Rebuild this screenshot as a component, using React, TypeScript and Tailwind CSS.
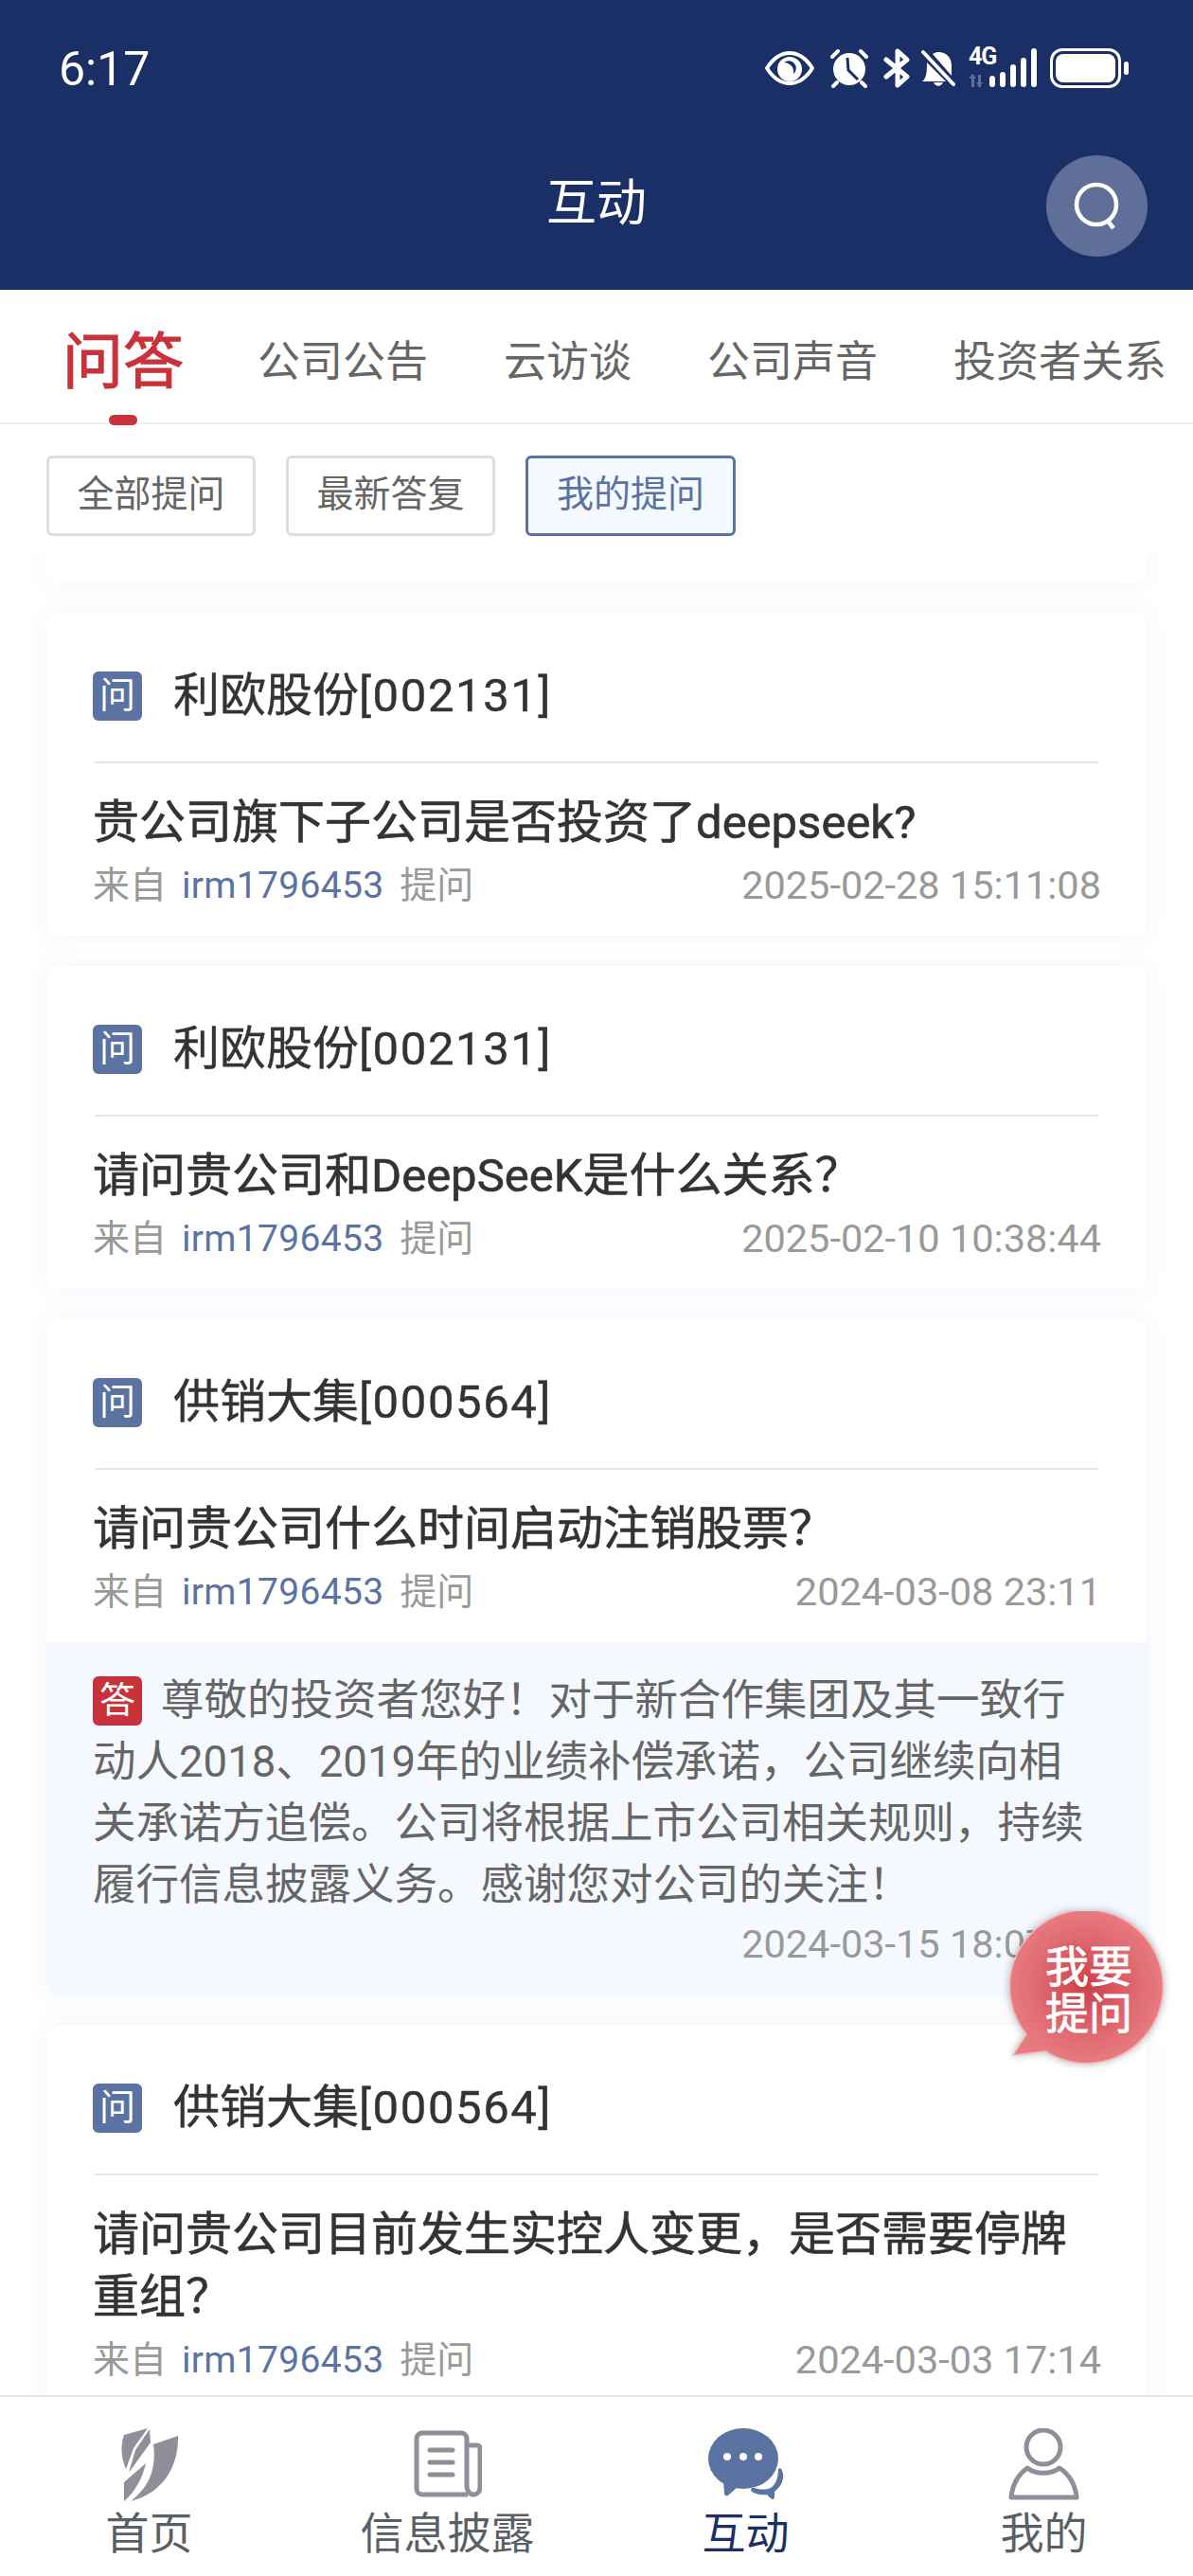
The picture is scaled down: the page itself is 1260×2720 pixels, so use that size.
import React from 'react';

const FONT = 'font-["Roboto","Noto_Sans_CJK_SC",sans-serif]';

interface Item {
  company: string;
  code: string;
  question: string;
  date: string;
  answer?: string[];
  answerDate?: string;
}

const items: Item[] = [
  { company: '利欧股份', code: '[002131]', question: '贵公司旗下子公司是否投资了deepseek?', date: '2025-02-28 15:11:08' },
  { company: '利欧股份', code: '[002131]', question: '请问贵公司和DeepSeeK是什么关系？', date: '2025-02-10 10:38:44' },
  {
    company: '供销大集',
    code: '[000564]',
    question: '请问贵公司什么时间启动注销股票？',
    date: '2024-03-08 23:11',
    answer: [
      '尊敬的投资者您好！对于新合作集团及其一致行',
      '动人2018、2019年的业绩补偿承诺，公司继续向相',
      '关承诺方追偿。公司将根据上市公司相关规则，持续',
      '履行信息披露义务。感谢您对公司的关注！',
    ],
    answerDate: '2024-03-15 18:07:07',
  },
  { company: '供销大集', code: '[000564]', question: '请问贵公司目前发生实控人变更，是否需要停牌重组？', date: '2024-03-03 17:14' },
];

function StatusIcons() {
  return (
    <div className="flex items-center text-white">
      <svg width="54" height="38" viewBox="0 0 54 38" className="mr-[15px]">
        <path d="M3 19C10 8 18 3 27 3s17 5 24 16c-7 11-15 16-24 16S10 30 3 19Z" fill="none" stroke="#fff" strokeWidth="4" strokeLinejoin="round" />
        <circle cx="27" cy="20" r="13" fill="#fff" />
        <path d="M21 13a7 7 0 1 0 10 12a10 10 0 0 1-10-12Z" fill="#1a2f66" transform="rotate(180 26 19)" />
      </svg>
      <svg width="42" height="42" viewBox="0 0 42 42" className="mr-[15px]">
        <circle cx="21" cy="22" r="17" fill="#fff" />
        <path d="M19 10l1 13 10 10" fill="none" stroke="#1a2f66" strokeWidth="3" />
        <path d="M3 9l6-6M39 9l-6-6M8 36l-4 4M34 36l4 4" stroke="#fff" strokeWidth="4" strokeLinecap="round" />
      </svg>
      <svg width="28" height="42" viewBox="0 0 28 42" className="mr-[12px]">
        <path d="M3 12l22 18-10 9V3l10 9L3 30" fill="none" stroke="#fff" strokeWidth="5" strokeLinejoin="round" strokeLinecap="round" />
      </svg>
      <svg width="36" height="40" viewBox="0 0 36 40" className="mr-[14px]">
        <path d="M12 5c8-5 20 0 20 12v11L12 5ZM6 14l20 20H1c4-3 5-8 5-20ZM13 35h10c-2 5-8 5-10 0Z" fill="#fff" />
        <path d="M2 3l32 34" stroke="#fff" strokeWidth="4" strokeLinecap="round" />
      </svg>
      <div className="relative w-[72px] h-[42px] mr-[15px]">
        <span className="absolute left-0 top-[-5px] text-[25px] leading-[28px] font-bold font-['Roboto'] tracking-[-1px]">4G</span>
        <svg width="72" height="42" viewBox="0 0 72 42" className="absolute left-0 top-0">
          <path d="M3 28h3v13H3zM0 32l4-5 4 5zM10 28h3v13h-3zM8 36h7l-3.500 5z" fill="#5f6f98" />
          <rect x="22" y="29" width="6" height="12" rx="3" fill="#fff" />
          <rect x="33" y="25" width="6" height="16" rx="3" fill="#fff" />
          <rect x="44" y="17" width="6" height="24" rx="3" fill="#fff" />
          <rect x="55" y="10" width="6" height="31" rx="3" fill="#fff" />
          <rect x="66" y="0" width="6" height="41" rx="3" fill="#fff" />
        </svg>
      </div>
      <div className="w-[75px] h-[42px] rounded-[13px] border-[3px] border-white p-[3px] ml-[-1px]">
        <div className="w-full h-full rounded-[8px] bg-white" />
      </div>
      <div className="w-[5px] h-[14px] rounded-full bg-white ml-[3px]" />
    </div>
  );
}

function Header() {
  return (
    <div className="h-[306px] shrink-0 bg-[#1a2f66] text-white relative">
      <div className="h-[144px] flex items-center justify-between pl-[62px] pr-[68px]">
        <span className="text-[50px] leading-none font-['Roboto'] mt-[2px]">6:17</span>
        <StatusIcons />
      </div>
      <div className="text-center text-[53px] leading-[142px]">互动</div>
      <div className="absolute left-[1105px] top-[164px] w-[107px] h-[107px] rounded-full bg-[#5f6f98] flex items-center justify-center">
        <svg width="56" height="56" viewBox="0 0 56 56">
          <circle cx="27" cy="26" r="21" fill="none" stroke="#fff" strokeWidth="4.500" />
          <path d="M38 42l7 9" stroke="#fff" strokeWidth="4.500" />
        </svg>
      </div>
    </div>
  );
}

function Tabs() {
  const tabs = ['公司公告', '云访谈', '公司声音', '投资者关系'];
  return (
    <div className="h-[142px] shrink-0 border-b-2 border-[#f0f0f0] relative z-20">
      <div className="h-full flex pl-[66px] overflow-hidden whitespace-nowrap">
        <span className="text-[64px] leading-[158px] text-[#c9323a] [-webkit-text-stroke:1.2px_#c9323a] mr-[78px] h-[125px] mt-[-2px]">问答</span>
        {tabs.map((t) => (
          <span key={t} className="text-[45px] leading-[154px] text-[#666666] mr-[80px]">{t}</span>
        ))}
      </div>
      <div className="absolute left-[115px] bottom-[-3px] w-[30px] h-[11px] rounded-full bg-[#c9323a]" />
    </div>
  );
}

function Filters() {
  return (
    <div className="h-[134px] shrink-0 bg-white flex items-start gap-[32px] pl-[49px] pt-[33px] relative z-10">
      {['全部提问', '最新答复'].map((t) => (
        <div key={t} className="w-[221px] h-[85px] rounded-[6px] border-[3px] border-[#dddddd] text-[39px] leading-[76px] text-center text-[#666666]">{t}</div>
      ))}
      <div className="w-[222px] h-[85px] rounded-[6px] border-[3px] border-[#5a73a3] bg-[#f4f9ff] text-[39px] leading-[76px] text-center text-[#5a73a3]">我的提问</div>
    </div>
  );
}

function Badge({ label, color }: { label: string; color: string }) {
  return (
    <span className={`w-[52px] h-[52px] rounded-[6px] shrink-0 text-white text-[38px] leading-[50px] text-center ${color}`}>{label}</span>
  );
}

function QuestionCard({ item }: { item: Item }) {
  return (
    <div className="rounded-[12px] bg-white shadow-[0_0_24px_rgba(90,120,220,0.09)] overflow-hidden shrink-0">
      <div className="px-[49px] pt-[62px] pb-[28px]">
        <div className="flex items-center h-[52px] gap-[33px]">
          <Badge label="问" color="bg-[#5a73a3]" />
          <span className="text-[49px] leading-[50px] text-[#333333] [-webkit-text-stroke:0.4px_#333333]">
            {item.company}
            <span className="tracking-[1.600px]">{item.code}</span>
          </span>
        </div>
        <div className="h-[2px] bg-[#e5e5e5] mt-[43px] mx-[2px]" />
        <div className="mt-[30px] text-[49px] leading-[66px] text-[#333333] [-webkit-text-stroke:0.6px_#333333]">{item.question}</div>
        <div className="mt-[8px] h-[50px] flex items-center text-[39px] text-[#999999]">
          <span>来自</span>
          <span className="text-[#5a73a3] ml-[16px] tracking-[0.300px]">irm1796453</span>
          <span className="ml-[17px]">提问</span>
          <span className="ml-auto mr-[-1px] text-[41.500px]">{item.date}</span>
        </div>
      </div>
      {item.answer && (
        <div className="bg-[#f5f9ff] h-[372px] px-[49px] pt-[29px] text-[45.500px] leading-[65px] text-[#666666]">
          {item.answer.map((line, i) => (
            <div key={line} className="flex items-center whitespace-nowrap h-[65px]">
              {i === 0 && (
                <span className="mr-[20px] flex">
                  <Badge label="答" color="bg-[#c9323a]" />
                </span>
              )}
              {line}
            </div>
          ))}
          <div className="text-right mr-[-1px] text-[41.500px] text-[#999999] leading-[50px] mt-[5px]">{item.answerDate}</div>
        </div>
      )}
    </div>
  );
}

function AskButton() {
  return (
    <div className="absolute left-[1066px] top-[2018px] w-[172px] h-[172px]">
      <svg width="172" height="172" viewBox="0 0 172 172" className="absolute inset-0 drop-shadow-[0_0_4px_rgba(0,0,0,0.3)]">
        <defs>
          <radialGradient id="ask">
            <stop offset="0%" stopColor="#cf3a43" />
            <stop offset="70%" stopColor="#e36a71" />
            <stop offset="100%" stopColor="#e8777d" />
          </radialGradient>
        </defs>
        <path d="M18 130A81 81 0 1 1 38 148L4 152Z" fill="url(#ask)" fillOpacity="0.96" stroke="#f2b9bb" strokeWidth="1.500" />
      </svg>
      <div className="absolute left-[36px] top-[35px] w-[96px] text-[46px] leading-[49px] text-white text-center [-webkit-text-stroke:0.8px_#ffffff]">我要提问</div>
    </div>
  );
}

function BottomTab({ label, active, children }: { label: string; active?: boolean; children: React.ReactNode }) {
  return (
    <div className="flex-1 flex flex-col items-center">
      <div className="h-[78px] flex items-center justify-center">{children}</div>
      <span className={`text-[46px] leading-[50px] mt-[9px] ${active ? 'text-[#1a2f66]' : 'text-[#5a5f66]'}`}>{label}</span>
    </div>
  );
}

function BottomBar() {
  return (
    <div className="h-[191px] shrink-0 bg-white border-t-2 border-[#e5e5e5] flex pt-[32px] relative z-10">
      <BottomTab label="首页">
        <svg width="62" height="78" viewBox="0 0 62 78" fill="#8e8f98">
          <path d="M4 8L29 1 14 22 6 44C1 32 0 20 4 8ZM31 2l1 14L9 48 16 24Z" />
          <path d="M35 18l26-9c1 30-14 60-50 69 16-12 28-30 24-60Z" />
          <path d="M4 58l23-20c-3 14-11 30-23 40Z" />
        </svg>
      </BottomTab>
      <BottomTab label="信息披露">
        <svg width="72" height="72" viewBox="0 0 72 72" fill="none" stroke="#8e8f98" strokeWidth="5">
          <path d="M57 68H9a6 6 0 0 1-6-6V9a6 6 0 0 1 6-6h41a6 6 0 0 1 6 6v50c0 5 3 9 7 9s7-3 7-8V19a3 3 0 0 0-3-3H56" strokeLinejoin="round" />
          <path d="M17 21h24M17 34h24M17 47h24" strokeLinecap="round" strokeWidth="5" />
        </svg>
      </BottomTab>
      <BottomTab label="互动" active>
        <svg width="80" height="76" viewBox="0 0 80 76">
          <ellipse cx="37" cy="32" rx="37" ry="32" fill="#5a73a3" />
          <path d="M16 56l1 13c1 3 3 3 5 1l9-8Z" fill="#5a73a3" />
          <circle cx="20" cy="30" r="4" fill="#fff" />
          <circle cx="37" cy="30" r="4" fill="#fff" />
          <circle cx="53" cy="30" r="4" fill="#fff" />
          <path d="M74 43c3-2 4 1 5 5 1 8-3 14-9 19l0 6c-1 3-3 2-5 0l-3-3c-5 1-13-1-16-3-2-3 0-5 3-4 6 2 12 2 17 0 6-4 8-12 8-20Z" fill="#5a73a3" />
        </svg>
      </BottomTab>
      <BottomTab label="我的">
        <svg width="76" height="76" viewBox="0 0 76 76" fill="none" stroke="#8e8f98" strokeWidth="5" strokeLinejoin="round">
          <ellipse cx="37" cy="20" rx="18" ry="18" />
          <path d="M20 42c9 7 25 7 34 0 12 8 17 20 18 31H3c1-11 6-23 17-31Z" />
        </svg>
      </BottomTab>
    </div>
  );
}

export default function App() {
  return (
    <div className={`w-[1260px] h-[2720px] bg-white flex flex-col overflow-hidden relative ${FONT}`}>
      <Header />
      <Tabs />
      <Filters />
      <div className="flex-1 min-h-0 overflow-hidden flex flex-col gap-[32px] px-[49px]">
        <div className="h-[33px] shrink-0 rounded-b-[12px] bg-white shadow-[0_0_24px_rgba(90,120,220,0.09)]" />
        {items.map((item, i) => (
          <QuestionCard key={i} item={item} />
        ))}
      </div>
      <BottomBar />
      <AskButton />
    </div>
  );
}
